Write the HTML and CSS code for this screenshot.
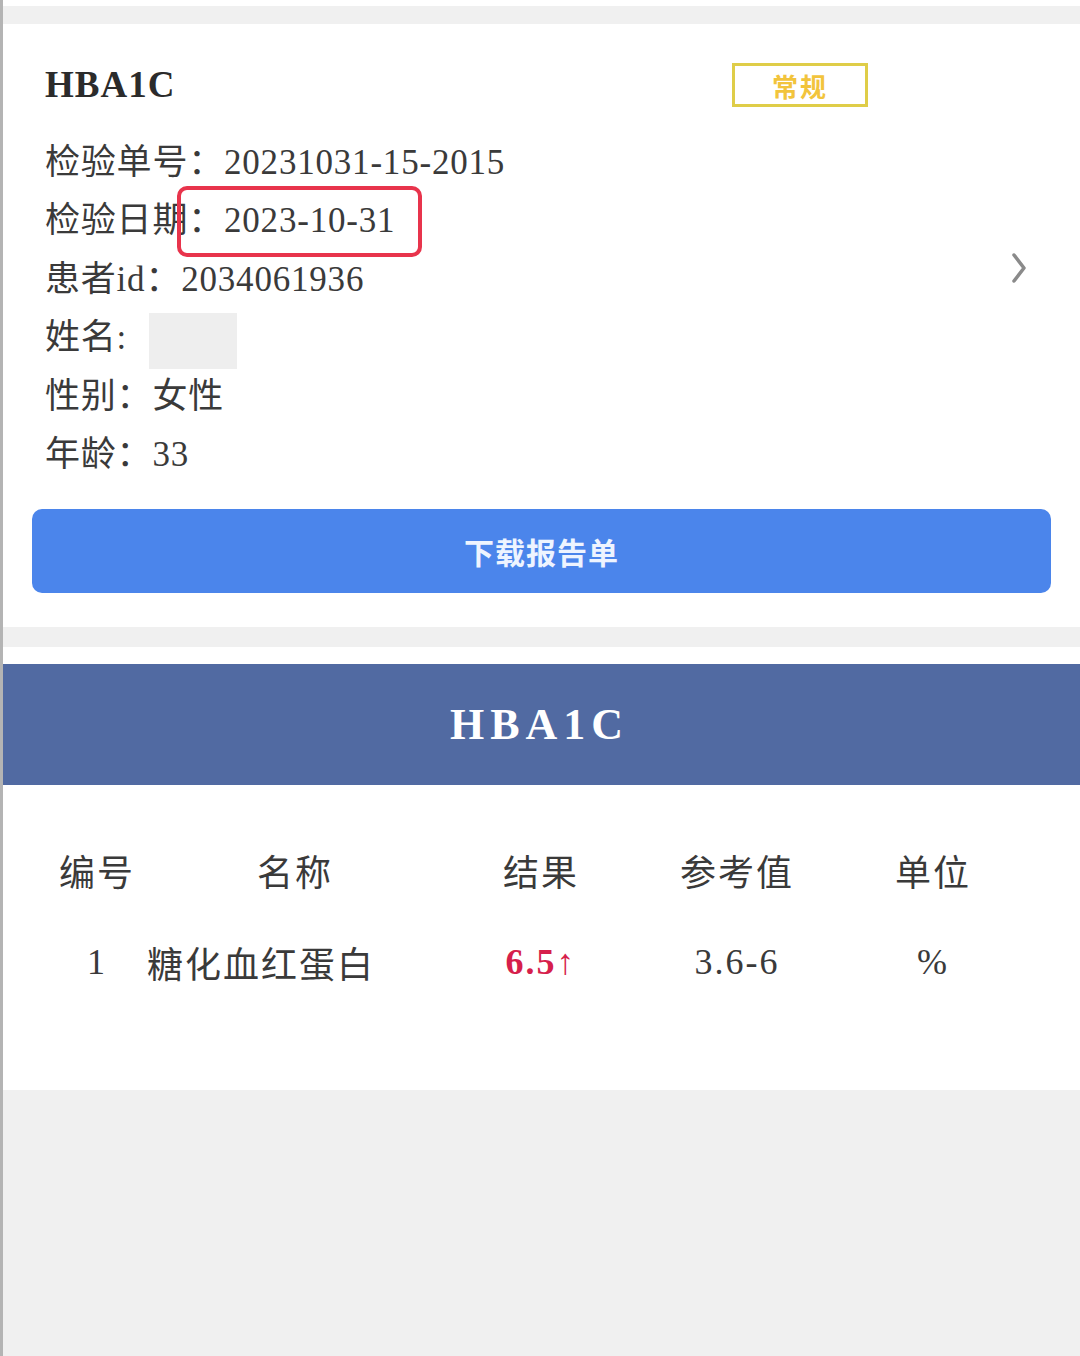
FILE: index.html
```html
<!DOCTYPE html>
<html lang="zh-CN">
<head>
    <meta charset="UTF-8">
    <meta name="viewport" content="width=device-width, initial-scale=1.0">
    <title>检验报告</title>
    <link rel="stylesheet" href="styles.css">
</head>
<body>
    <div class="page">
        <div class="status"></div>

        <!-- Report summary card -->
        <div class="card">
            <div class="card-top">
                <div class="card-info">
                    <div class="title-row">
                        <span class="title">HBA1C</span>
                        <span class="badge">常规</span>
                    </div>
                    <div class="info-row">检验单号：20231031-15-2015</div>
                    <div class="info-row">
                        检验日期：2023-10-31
                        <span class="mark"></span>
                    </div>
                    <div class="info-row">患者id：2034061936</div>
                    <div class="info-row">姓名: <span class="masked"></span></div>
                    <div class="info-row">性别：女性</div>
                    <div class="info-row">年龄：33</div>
                </div>
                <svg class="chevron" viewBox="0 0 16 32">
                    <polyline points="3,3 13,16 3,29" fill="none" stroke="#8a8a8a" stroke-width="3.5" stroke-linecap="round" stroke-linejoin="round"/>
                </svg>
            </div>
            <button class="download">下载报告单</button>
        </div>

        <!-- Result table -->
        <div class="report">
            <div class="report-head">HBA1C</div>
            <div class="table">
                <div class="trow thead">
                    <span>编号</span>
                    <span>名称</span>
                    <span>结果</span>
                    <span>参考值</span>
                    <span>单位</span>
                </div>
                <div class="trow">
                    <span>1</span>
                    <span class="name">糖化血红蛋白</span>
                    <span class="result">6.5<span class="arrow">↑</span></span>
                    <span>3.6-6</span>
                    <span>%</span>
                </div>
            </div>
        </div>
    </div>
</body>
</html>
```

FILE: styles.css
```css
* {
    box-sizing: border-box;
}

body {
    margin: 0;
    background-color: #f0f0f0;
    font-family: "Liberation Serif", "Noto Sans CJK SC", serif;
    color: #333;
}

.page {
    min-height: 1356px;
    border-left: 3px solid #b4b4b4;
}

.status {
    height: 6px;
    background: #fff;
}

.card {
    margin: 18px 0 20px;
    background: #fff;
    padding: 39px 29px 34px;
}

.card-top {
    display: flex;
    align-items: center;
    padding-left: 13px;
}

.card-info {
    width: 823px;
}

.title-row {
    display: flex;
    justify-content: space-between;
    align-items: center;
    height: 44px;
    margin-bottom: 27px;
}

.title {
    font-size: 37px;
    font-weight: bold;
    letter-spacing: 1px;
    line-height: 44px;
    color: #2b2b2b;
}

.badge {
    width: 136px;
    height: 44px;
    border: 3px solid #dfcd48;
    color: #f2c43c;
    font-size: 26px;
    font-weight: bold;
    letter-spacing: 2px;
    display: flex;
    align-items: center;
    justify-content: center;
}

.info-row {
    position: relative;
    height: 58.4px;
    line-height: 58px;
    font-size: 35px;
    letter-spacing: 0.8px;
    color: #3a3a3a;
    white-space: nowrap;
}

.mark {
    position: absolute;
    left: 132px;
    top: -6px;
    width: 245px;
    height: 71px;
    border: 4px solid #e8344c;
    border-radius: 10px;
}

.masked {
    display: inline-block;
    width: 88px;
    height: 56px;
    margin-left: 12px;
    vertical-align: middle;
    background: #eeeeee;
}

.chevron {
    width: 16px;
    height: 32px;
    margin-left: auto;
    margin-right: 24px;
    margin-bottom: 11px;
}

.download {
    display: block;
    width: 100%;
    height: 84px;
    margin-top: 25px;
    background-color: #4b85eb;
    border: none;
    border-radius: 10px;
    color: #eef4ff;
    font-family: inherit;
    font-size: 30px;
    font-weight: bold;
    letter-spacing: 1px;
}

.report {
    background: #fff;
    padding-top: 17px;
}

.report-head {
    height: 121px;
    background-color: #516aa2;
    color: #fff;
    display: flex;
    align-items: center;
    justify-content: center;
    padding-right: 4px;
    font-size: 44px;
    font-weight: bold;
    letter-spacing: 6px;
}

.table {
    padding: 39px 0 82px 44px;
}

.trow {
    display: grid;
    grid-template-columns: 100px 296px 196px 196px 196px;
    height: 92px;
    align-items: center;
    text-align: center;
    font-size: 36px;
    letter-spacing: 2px;
    color: #3a3a3a;
}

.trow .name {
    text-align: left;
}

.result {
    color: #d61f4c;
    font-weight: bold;
}

.arrow {
    font-weight: normal;
}
```
